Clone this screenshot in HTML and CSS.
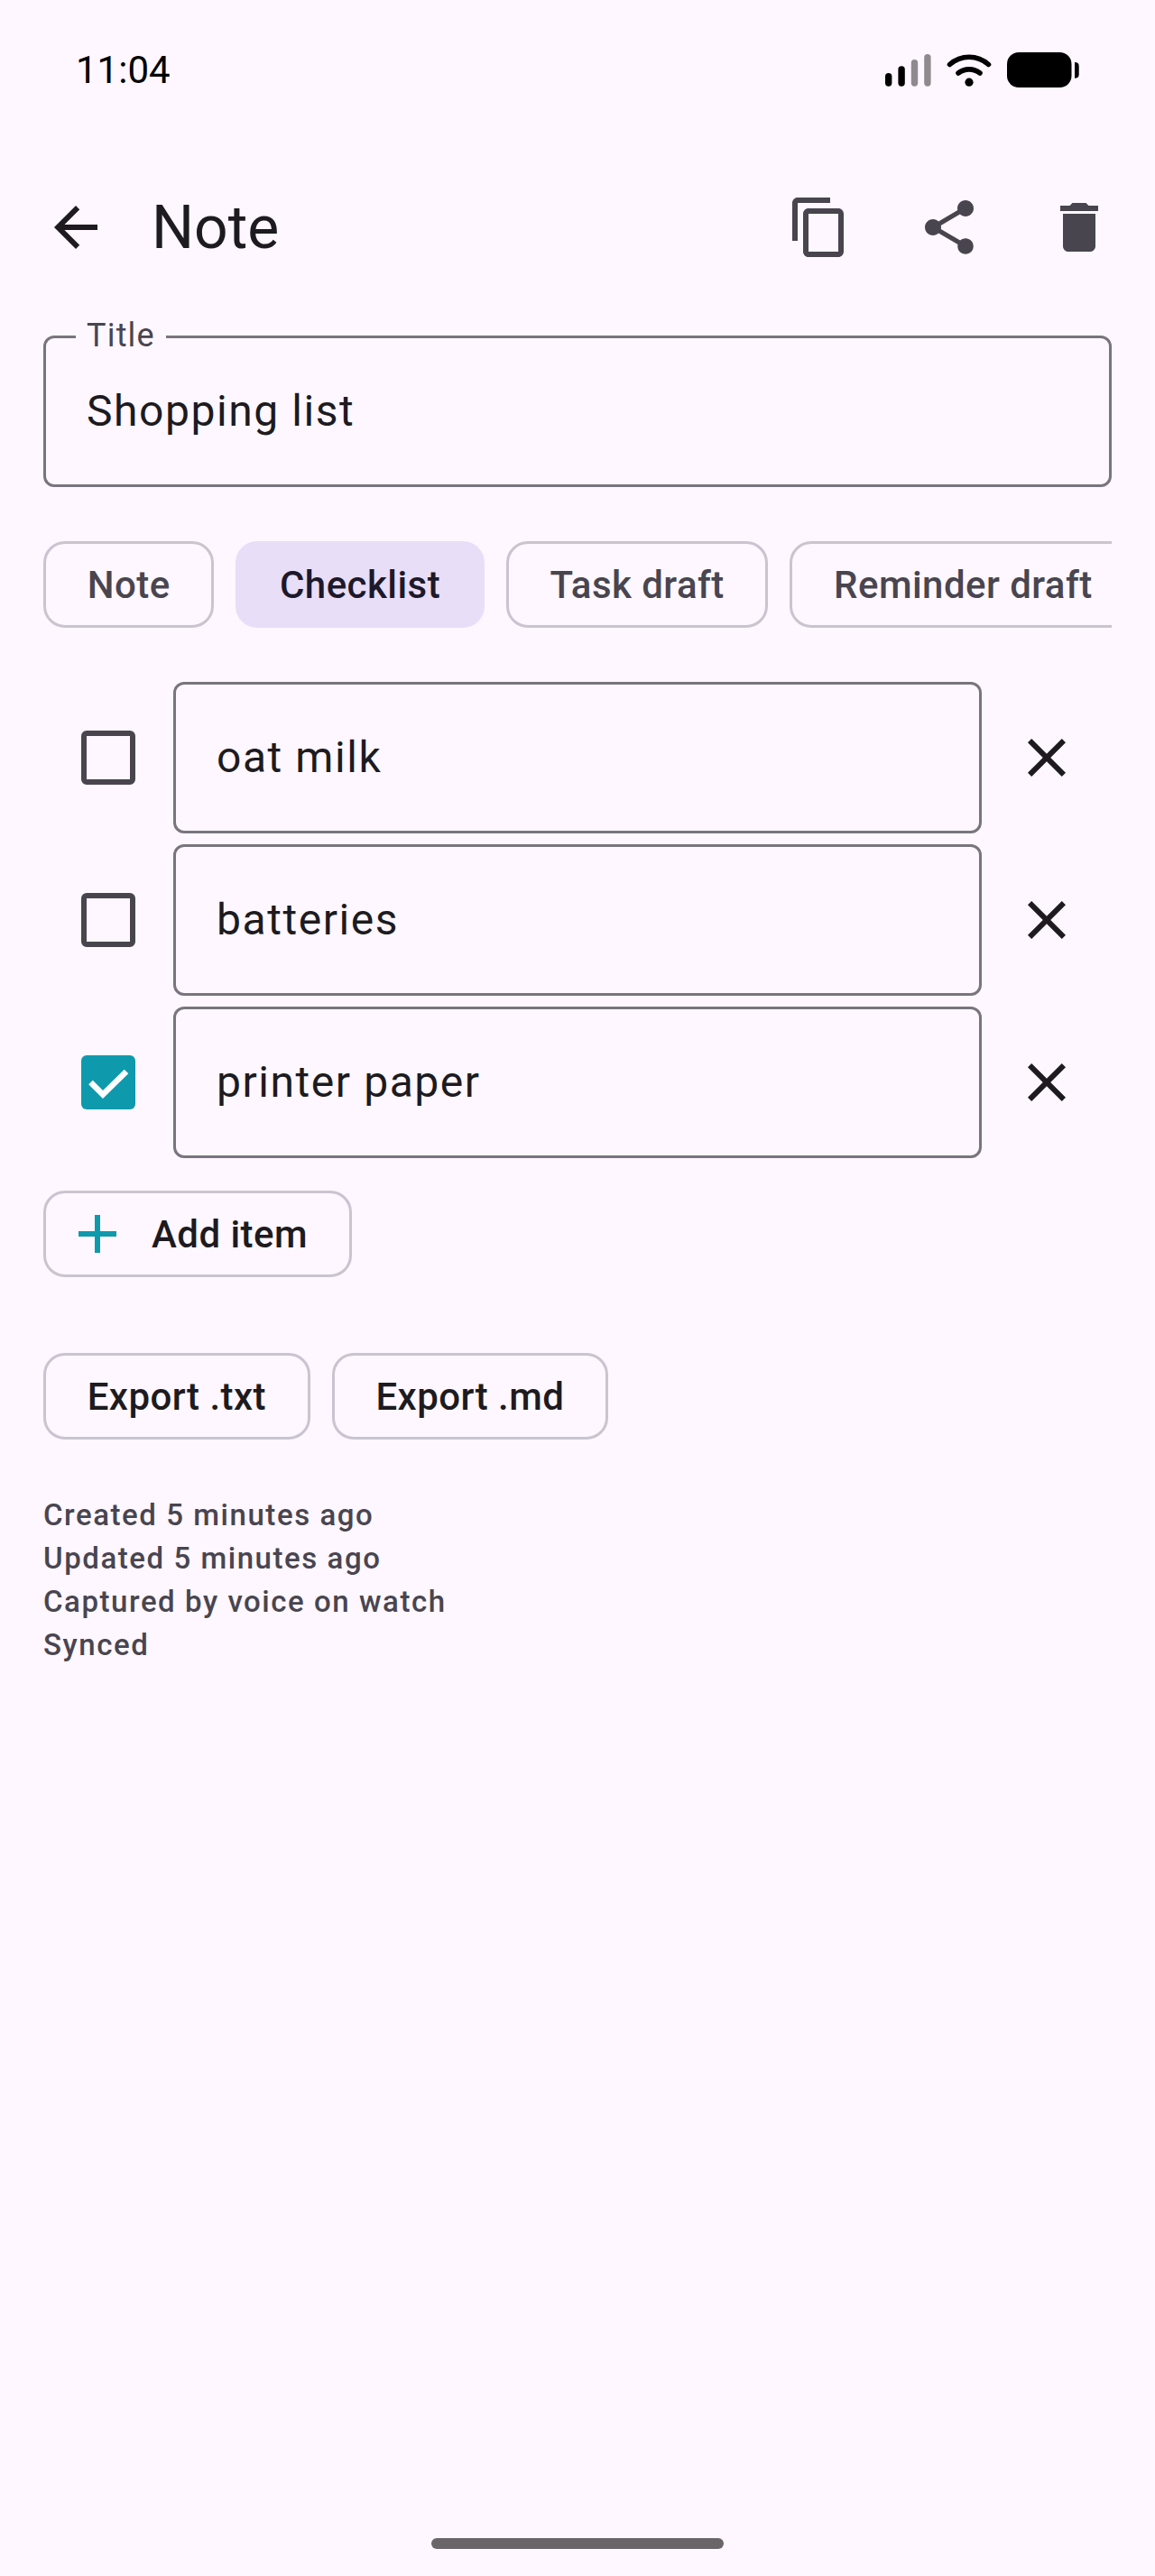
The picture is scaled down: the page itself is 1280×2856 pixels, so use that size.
FILE: index.html
```html
<!DOCTYPE html>
<html lang="en">
<head>
    <meta charset="UTF-8">
    <meta name="viewport" content="width=device-width, initial-scale=1.0">
    <title>Note</title>
    <link rel="stylesheet" href="styles.css">
</head>
<body>

    <div class="screen">
        <div class="status-bar">
            <span class="clock">11:04</span>
            <svg class="status-icons" width="216" height="40" viewBox="980 58 216 40">
                <rect x="981" y="81" width="7.4" height="14.8" rx="3.7" fill="#000"/>
                <rect x="995.4" y="73.3" width="7.4" height="22.5" rx="3.7" fill="#000"/>
                <rect x="1009.8" y="66" width="7.4" height="29.8" rx="3.7" fill="#8e8a8e"/>
                <rect x="1024.2" y="60" width="7.4" height="35.8" rx="3.7" fill="#8e8a8e"/>
                <path d="M1052.5 71.5C1065 60.5 1083 60.5 1095.5 71.5" fill="none" stroke="#000" stroke-width="5.6" stroke-linecap="round"/>
                <path d="M1062 81C1069 75.5 1079 75.5 1086 81" fill="none" stroke="#000" stroke-width="5.6" stroke-linecap="round"/>
                <circle cx="1074" cy="91.2" r="4.6" fill="#000"/>
                <rect x="1116" y="58" width="71.5" height="39" rx="13" fill="#000"/>
                <path d="M1191 69c3 0 4.7 1.5 4.7 4v9.700c0 2.500-1.700 4-4.700 4z" fill="#000"/>
            </svg>
        </div>

        <div class="top-bar">
            <button class="icon-btn back-btn">
                <svg viewBox="0 0 24 24"><path d="M20 11H7.830l5.590-5.590L12 4l-8 8 8 8 1.410-1.410L7.830 13H20v-2z"/></svg>
            </button>
            <h1 class="page-title">Note</h1>
            <button class="icon-btn muted">
                <svg viewBox="0 0 24 24"><path d="M16 1H4c-1.100 0-2 .9-2 2v14h2V3h12V1zm3 4H8c-1.100 0-2 .9-2 2v14c0 1.100.9 2 2 2h11c1.100 0 2-.9 2-2V7c0-1.100-.9-2-2-2zm0 16H8V7h11v14z"/></svg>
            </button>
            <button class="icon-btn muted">
                <svg viewBox="0 0 24 24"><path d="M18 16.080c-.76 0-1.440.3-1.960.77L8.910 12.700c.05-.23.09-.46.09-.7s-.04-.47-.09-.7l7.050-4.110c.54.5 1.250.81 2.040.81 1.660 0 3-1.340 3-3s-1.340-3-3-3-3 1.340-3 3c0 .24.04.47.09.7L8.040 9.810C7.500 9.310 6.790 9 6 9c-1.660 0-3 1.340-3 3s1.340 3 3 3c.79 0 1.500-.31 2.040-.81l7.120 4.160c-.05.21-.08.43-.08.65 0 1.610 1.310 2.920 2.920 2.920 1.610 0 2.920-1.310 2.920-2.920s-1.310-2.920-2.920-2.920z"/></svg>
            </button>
            <button class="icon-btn muted">
                <svg viewBox="0 0 24 24"><path d="M6 19c0 1.100.9 2 2 2h8c1.100 0 2-.9 2-2V7H6v12zM19 4h-3.500l-1-1h-5l-1 1H5v2h14V4z"/></svg>
            </button>
        </div>

        <div class="content">
            <div class="field title-field">
                <span class="field-label">Title</span>
                Shopping list
            </div>

            <div class="chips">
                <div class="chip">Note</div>
                <div class="chip selected">Checklist</div>
                <div class="chip">Task draft</div>
                <div class="chip">Reminder draft</div>
            </div>

            <div class="items">
                <div class="item">
                    <div class="check-cell"><span class="checkbox"></span></div>
                    <div class="field item-field">oat milk</div>
                    <button class="icon-btn remove-btn">
                        <svg viewBox="0 0 24 24"><path d="M19 6.410L17.590 5 12 10.590 6.410 5 5 6.410 10.590 12 5 17.590 6.410 19 12 13.410 17.590 19 19 17.590 13.410 12z"/></svg>
                    </button>
                </div>
                <div class="item">
                    <div class="check-cell"><span class="checkbox"></span></div>
                    <div class="field item-field">batteries</div>
                    <button class="icon-btn remove-btn">
                        <svg viewBox="0 0 24 24"><path d="M19 6.410L17.590 5 12 10.590 6.410 5 5 6.410 10.590 12 5 17.590 6.410 19 12 13.410 17.590 19 19 17.590 13.410 12z"/></svg>
                    </button>
                </div>
                <div class="item">
                    <div class="check-cell">
                        <span class="checkbox checked">
                            <svg width="60" height="60" viewBox="0 0 60 60"><path d="M10.500 30L24 43.500 50 18" fill="none" stroke="#fff" stroke-width="6.500"/></svg>
                        </span>
                    </div>
                    <div class="field item-field">printer paper</div>
                    <button class="icon-btn remove-btn">
                        <svg viewBox="0 0 24 24"><path d="M19 6.410L17.590 5 12 10.590 6.410 5 5 6.410 10.590 12 5 17.590 6.410 19 12 13.410 17.590 19 19 17.590 13.410 12z"/></svg>
                    </button>
                </div>
            </div>

            <div class="add-row">
                <div class="chip action add-chip">
                    <svg class="add-icon" viewBox="0 0 24 24"><path d="M19 13h-6v6h-2v-6H5v-2h6V5h2v6h6v2z"/></svg>
                    Add item
                </div>
            </div>

            <div class="export-row">
                <div class="chip action">Export .txt</div>
                <div class="chip action">Export .md</div>
            </div>

            <div class="meta">
                <p>Created 5 minutes ago</p>
                <p>Updated 5 minutes ago</p>
                <p>Captured by voice on watch</p>
                <p>Synced</p>
            </div>
        </div>

        <div class="home-bar"></div>
    </div>

</body>
</html>
```

FILE: styles.css
```css
* {
    box-sizing: border-box;
}
body {
    margin: 0;
    background-color: #fef7ff;
    font-family: Roboto, sans-serif;
    color: #1d1b20;
}
p, h1 {
    margin: 0;
}
.screen {
    width: 1280px;
    height: 2856px;
    display: flex;
    flex-direction: column;
    overflow: hidden;
}
.status-bar {
    height: 156px;
    padding: 0 84px 3px;
    display: flex;
    align-items: center;
    justify-content: space-between;
    color: #000;
}
.clock {
    margin-top: 2px;
    font-size: 42px;
}
.status-icons {
    display: block;
    margin-top: 2px;
}
.top-bar {
    height: 192px;
    padding: 0 12px;
    display: flex;
    align-items: center;
}
.page-title {
    flex: 1;
    margin-left: 12px;
    font-size: 66px;
    font-weight: 400;
}
.icon-btn {
    width: 144px;
    height: 144px;
    padding: 0;
    border: none;
    background: none;
    display: flex;
    align-items: center;
    justify-content: center;
    flex-shrink: 0;
}
.icon-btn svg {
    width: 72px;
    height: 72px;
    fill: #1d1b20;
}
.icon-btn.muted svg {
    fill: #49454f;
}
.content {
    padding: 24px 48px 0;
}
.field {
    position: relative;
    height: 168px;
    padding: 0 45px 1px;
    display: flex;
    align-items: center;
    border: 3px solid #79747e;
    border-radius: 12px;
    font-size: 48px;
    letter-spacing: 1.55px;
}
.field-label {
    position: absolute;
    top: -27px;
    left: 33px;
    padding: 0 12px;
    background-color: #fef7ff;
    color: #49454f;
    font-size: 36px;
    line-height: 48px;
    letter-spacing: 1.2px;
}
.chips {
    margin-top: 60px;
    display: flex;
    gap: 24px;
    overflow: hidden;
}
.chip {
    height: 96px;
    padding: 0 45.7px;
    display: flex;
    align-items: center;
    flex-shrink: 0;
    border: 3px solid #cac4d0;
    border-radius: 24px;
    color: #49454f;
    font-size: 42px;
    font-weight: 500;
    letter-spacing: 0.45px;
    white-space: nowrap;
}
.chip.selected {
    border-color: #e8def8;
    background-color: #e8def8;
    color: #1d192b;
}
.chip.action {
    color: #1d1b20;
}
.items {
    margin-top: 60px;
    display: flex;
    flex-direction: column;
    gap: 12px;
}
.item {
    display: flex;
    align-items: center;
}
.check-cell {
    width: 144px;
    display: flex;
    justify-content: center;
    flex-shrink: 0;
}
.checkbox {
    width: 60px;
    height: 60px;
    display: block;
    border: 6px solid #49454f;
    border-radius: 6px;
}
.checkbox.checked {
    border: none;
    background-color: #0f99ad;
}
.checkbox svg {
    display: block;
}
.item-field {
    flex: 1;
}
.add-row {
    margin-top: 36px;
    display: flex;
}
.add-chip {
    padding-left: 21px;
    gap: 24px;
}
.add-icon {
    width: 72px;
    height: 72px;
    fill: #0f99ad;
}
.export-row {
    margin-top: 84px;
    display: flex;
    gap: 24px;
}
.meta {
    margin-top: 60px;
    color: #49454f;
    font-size: 33px;
    font-weight: 500;
    line-height: 48px;
    letter-spacing: 1.55px;
}
.home-bar {
    width: 324px;
    height: 12px;
    margin: auto auto 30px;
    border-radius: 6px;
    background-color: #696569;
}
```
